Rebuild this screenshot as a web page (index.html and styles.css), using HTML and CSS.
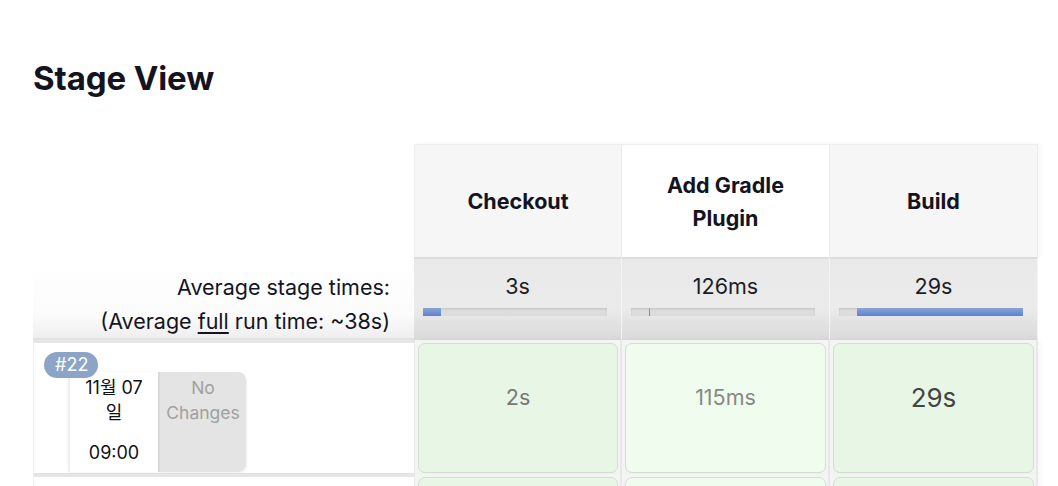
FILE: index.html
```html
<!DOCTYPE html>
<html lang="ko">
<head>
<meta charset="utf-8">
<title>Stage View</title>
<link rel="stylesheet" href="styles.css">
</head>
<body>
<h2 class="title">Stage View</h2>
<div class="stage-view">
  <div class="grid">
    <div class="blank"></div>
    <div class="th">Checkout</div>
    <div class="th th-hover">Add Gradle<br>Plugin</div>
    <div class="th">Build</div>

    <div class="avg-label">
      <div>Average stage times:</div>
      <div>(Average <u>full</u> run time: ~38s)</div>
    </div>
    <div class="avg">
      <div class="avg-time">3s</div>
      <div class="bar"><div class="fill" style="margin-left:0;width:18px"></div></div>
    </div>
    <div class="avg">
      <div class="avg-time">126ms</div>
      <div class="bar"><div class="fill" style="margin-left:18px;width:1px"></div></div>
    </div>
    <div class="avg">
      <div class="avg-time">29s</div>
      <div class="bar"><div class="fill" style="margin-left:18px;width:166px"></div></div>
    </div>

    <div class="build-cell">
      <span class="badge">#22</span>
      <div class="build-info">
        <div class="date">
          <div>11월 07<br>일</div>
          <div class="time">09:00</div>
        </div>
        <div class="changes">No<br>Changes</div>
      </div>
    </div>
    <div class="stage-cell"><div class="box">2s</div></div>
    <div class="stage-cell"><div class="box box-light">115ms</div></div>
    <div class="stage-cell"><div class="box box-long">29s</div></div>

    <div class="build-cell next"></div>
    <div class="stage-cell"><div class="box"></div></div>
    <div class="stage-cell"><div class="box box-light"></div></div>
    <div class="stage-cell"><div class="box"></div></div>
  </div>
</div>
</body>
</html>
```
FILE: styles.css
```css
html, body {
  margin: 0;
  padding: 0;
  background: #fff;
  font-family: Inter, "Noto Sans CJK KR", sans-serif;
  color: #14141f;
  overflow: hidden;
}
.title {
  margin: 0;
  padding: 59px 0 0 33px;
  font-size: 33px;
  font-weight: 700;
  line-height: 38px;
  letter-spacing: -0.1px;
}
.stage-view {
  padding: 47px 0 0 33px;
}
.grid {
  display: grid;
  grid-template-columns: 381px 208px 208px 208px;
  grid-template-rows: 113px 83px 134px 40px;
}
.blank {
  background: #fff;
}
.th {
  background: #f6f6f6;
  border-right: 1px solid #ececec;
  border-top: 1px solid #eee;
  display: flex;
  align-items: center;
  justify-content: center;
  text-align: center;
  font-weight: 700;
  font-size: 21.5px;
  line-height: 33px;
  padding-top: 1px;
  box-sizing: border-box;
  box-shadow: 2px 0 4px rgba(0,0,0,0.04);
}
.th:nth-child(2) { border-left: 1px solid #ececec; }
.th-hover { background: #fff; }
.avg-label {
  margin-top: 5px;
  background: linear-gradient(#fff 0%, #fbfbfb 70%, #efefef 100%);
  border-bottom: 2px solid #e2e2e2;
  text-align: right;
  padding: 8px 24px 0 0;
  font-size: 21.5px;
  line-height: 34px;
  color: #14141f;
}
.avg-label u { text-underline-offset: 3px; }
.avg {
  background: linear-gradient(#e9e9e9 0%, #ebebeb 60%, #d9d9d9 100%);
  border-top: 2px solid #dddddd;
  border-right: 1px solid #f4f4f4;
  display: flex;
  flex-direction: column;
  align-items: center;
}
.avg-time {
  padding-top: 14px;
  font-size: 21.5px;
  line-height: 26px;
  color: #1c1c24;
}
.bar {
  align-self: flex-start;
  margin: 9px 0 0 9px;
  width: 184px;
  height: 8px;
  background: #dcdcdc;
  box-shadow: inset 0 1px 2px rgba(0,0,0,0.12);
  display: flex;
}
.fill {
  height: 8px;
  background: linear-gradient(#8aa6d6, #5b82cf);
}
.build-cell {
  border-top: 3px solid #e6e6e6;
  border-bottom: 1px solid #e2e2e2;
  border-left: 1px solid #efefef;
  position: relative;
  padding: 29px 0 0 36px;
}
.build-cell.next { border-bottom: none; }
.badge {
  position: absolute;
  left: 10px;
  top: 9px;
  background: #8ca5c7;
  color: #fff;
  font-size: 18px;
  line-height: 26px;
  padding: 0 10px 0 11px;
  border-radius: 13px;
}
.build-info {
  display: flex;
  height: 100px;
}
.date {
  width: 88px;
  background: #fff;
  box-shadow: -2px 0 2px rgba(0,0,0,0.08);
  text-align: center;
  font-size: 18px;
  line-height: 25px;
  color: #111;
  padding-top: 3px;
  box-sizing: border-box;
}
.time { margin-top: 15px; }
.changes {
  width: 88px;
  background: #e4e4e4;
  border-radius: 0 8px 8px 0;
  border-left: 2px solid #d8d8d8;
  box-sizing: border-box;
  text-align: center;
  color: #a0a0a0;
  font-size: 17.5px;
  line-height: 25px;
  padding-top: 3px;
  box-shadow: 1px 1px 2px rgba(0,0,0,0.06);
}
.stage-cell {
  background: #f3f5f3;
  border-right: 2px solid #e8e8e8;
  padding: 3px 2px 1px 3px;
  box-shadow: 2px 0 4px rgba(0,0,0,0.04);
}
.stage-cell:nth-child(4n+2) { border-left: 1px solid #e8e8e8; }
.box {
  height: 100%;
  box-sizing: border-box;
  background: #e8f7e5;
  border: 1.5px solid #d3dfd2;
  border-radius: 7px;
  display: flex;
  align-items: flex-start;
  justify-content: center;
  padding-top: 40px;
  font-size: 21.5px;
  line-height: 26px;
  color: #777;
}
.box-light { background: #effcee; color: #888; }
.box-long { font-size: 26px; color: #444; padding-top: 41px; }
```
